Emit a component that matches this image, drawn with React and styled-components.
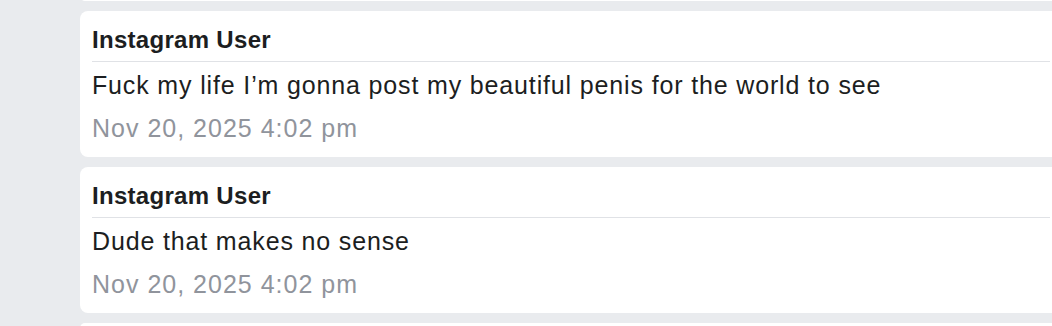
import React from "react";
import styled, { createGlobalStyle } from "styled-components";

const GlobalStyle = createGlobalStyle`
  html, body {
    margin: 0;
    padding: 0;
    background: #e9ebee;
    overflow: hidden;
  }
  body {
    font-family: "Liberation Sans", Arial, Helvetica, sans-serif;
    -webkit-font-smoothing: antialiased;
  }
`;

const messages = [
  {
    id: 1,
    sender: "Instagram User",
    text: "Fuck my life I’m gonna post my beautiful penis for the world to see",
    time: "Nov 20, 2025 4:02 pm",
  },
  {
    id: 2,
    sender: "Instagram User",
    text: "Dude that makes no sense",
    time: "Nov 20, 2025 4:02 pm",
  },
];

const App = () => {
  return (
    <>
      <GlobalStyle />
      <Thread>
        <Card $stub />
        {messages.map((m) => (
          <Card key={m.id}>
            <Sender>{m.sender}</Sender>
            <Body>{m.text}</Body>
            <Time>{m.time}</Time>
          </Card>
        ))}
        <Card $stub />
      </Thread>
    </>
  );
};

export default App;

// the list runs past the right edge of the window, like the original
const Thread = styled.div`
  display: flex;
  flex-direction: column;
  gap: 10px;
  padding-left: 80px;
  margin-top: -9px;
  width: 990px;
`;

const Card = styled.div`
  background: #ffffff;
  border-radius: 8px;
  padding: ${(p) => (p.$stub ? "0" : "14px 20px 11px 12px")};
  height: ${(p) => (p.$stub ? "10px" : "auto")};
`;

const Sender = styled.div`
  font-size: 24px;
  font-weight: 700;
  letter-spacing: 0.3px;
  line-height: 30px;
  color: #1c1e21;
  padding-bottom: 6px;
  border-bottom: 1px solid #e0e2e6;
`;

const Body = styled.div`
  font-size: 25px;
  letter-spacing: 0.85px;
  line-height: 36px;
  margin-top: 5px;
  color: #1c1e21;
`;

const Time = styled.div`
  font-size: 25px;
  letter-spacing: 1px;
  line-height: 36px;
  margin-top: 7px;
  color: #90949c;
`;
